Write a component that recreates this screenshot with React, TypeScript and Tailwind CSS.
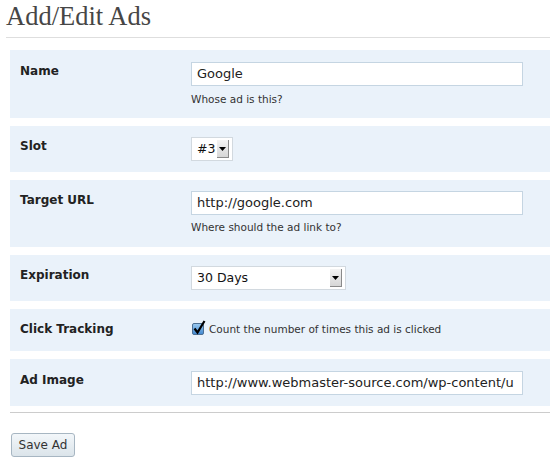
import React from "react";

const sans = "font-['DejaVu_Sans',sans-serif]";

function Arrow() {
  return (
    <div className="w-[12px] h-[18px] bg-gradient-to-b from-[#f4f4f4] to-[#d6d6d6] border-r border-b border-[#8a8a8a] flex items-center justify-center">
      <svg width="7" height="4" viewBox="0 0 7 4">
        <path d="M0 0 L7 0 L3.5 4 Z" fill="#000" />
      </svg>
    </div>
  );
}

function Row({
  label,
  children,
  pt = "pt-[11px]",
  pb = "pb-[11px]",
}: {
  label: string;
  children: React.ReactNode;
  pt?: string;
  pb?: string;
}) {
  return (
    <div className={`flex bg-[#eaf2fa] ${pt} ${pb}`}>
      <div className={`w-[181px] pl-[10px] pt-[1px] text-[12px] leading-[17px] font-bold text-[#222] ${sans}`}>
        {label}
      </div>
      <div className="flex-1 flex flex-col">{children}</div>
    </div>
  );
}

function TextInput({ value }: { value: string }) {
  return (
    <div className={`w-[332px] h-[24px] bg-white border border-[#c5d5e2] pl-[5px] flex items-center overflow-hidden whitespace-nowrap text-[13px] text-[#222] ${sans}`}>
      {value}
    </div>
  );
}

export default function App() {
  return (
    <div className="w-[550px] h-[465px] bg-white overflow-hidden">
      <h2 className="pl-[6px] pt-[3px] text-[26.5px] leading-[26px] text-[#464646] font-['Liberation_Serif',serif]">
        Add/Edit Ads
      </h2>
      <div className="ml-[6px] mt-[8px] h-px bg-[#dedede]" />
      <div className="ml-[10px] mt-[12px] flex flex-col gap-[8px]">
        <Row label="Name" pt="pt-[12px]" pb="pb-[12px]">
          <TextInput value="Google" />
          <div className={`mt-[6px] text-[10.5px] leading-[14px] text-[#333] ${sans}`}>Whose ad is this?</div>
        </Row>
        <Row label="Slot">
          <div className={`w-[42px] h-[24px] bg-white border border-[#d2d9df] flex items-center pl-[5px] pr-[3px] justify-between text-[12.5px] text-[#111] ${sans}`}>
            <span>#3</span>
            <Arrow />
          </div>
        </Row>
        <Row label="Target URL" pb="pb-[13px]">
          <TextInput value="http://google.com" />
          <div className={`mt-[5px] text-[10.5px] leading-[14px] text-[#333] ${sans}`}>Where should the ad link to?</div>
        </Row>
        <Row label="Expiration">
          <div className={`w-[155px] h-[24px] bg-white border border-[#d2d9df] flex items-center pl-[5px] pr-[3px] justify-between text-[12.5px] text-[#111] ${sans}`}>
            <span>30 Days</span>
            <Arrow />
          </div>
        </Row>
        <Row label="Click Tracking">
          <div className={`flex items-center h-[20px] text-[10.5px] text-[#333] ${sans}`}>
            <svg width="16" height="16" viewBox="0 0 16 16" className="mr-[2px] -mt-[4px]">
              <defs>
                <linearGradient id="cb" x1="0" y1="0" x2="0" y2="1">
                  <stop offset="0" stopColor="#9ccbf0" />
                  <stop offset="1" stopColor="#3f86cf" />
                </linearGradient>
              </defs>
              <rect x="1.5" y="3.5" width="11" height="11" rx="1.5" fill="url(#cb)" stroke="#4c6f93" />
              <path d="M3.5 8.5 L6.5 12.5 L13.5 1" stroke="#000" strokeWidth="2.2" fill="none" />
            </svg>
            <span>Count the number of times this ad is clicked</span>
          </div>
        </Row>
        <Row label="Ad Image" pt="pt-[12px]">
          <TextInput value="http://www.webmaster-source.com/wp-content/u" />
        </Row>
      </div>
      <div className="ml-[10px] mt-[6px] h-px bg-[#cccccc]" />
      <button
        className={`ml-[11px] mt-[20px] w-[64px] h-[24px] rounded-[3px] border border-[#a7b6c2] bg-gradient-to-b from-[#f3f7fa] to-[#dbe4ea] text-[12px] text-[#333] ${sans}`}
      >
        Save Ad
      </button>
    </div>
  );
}
